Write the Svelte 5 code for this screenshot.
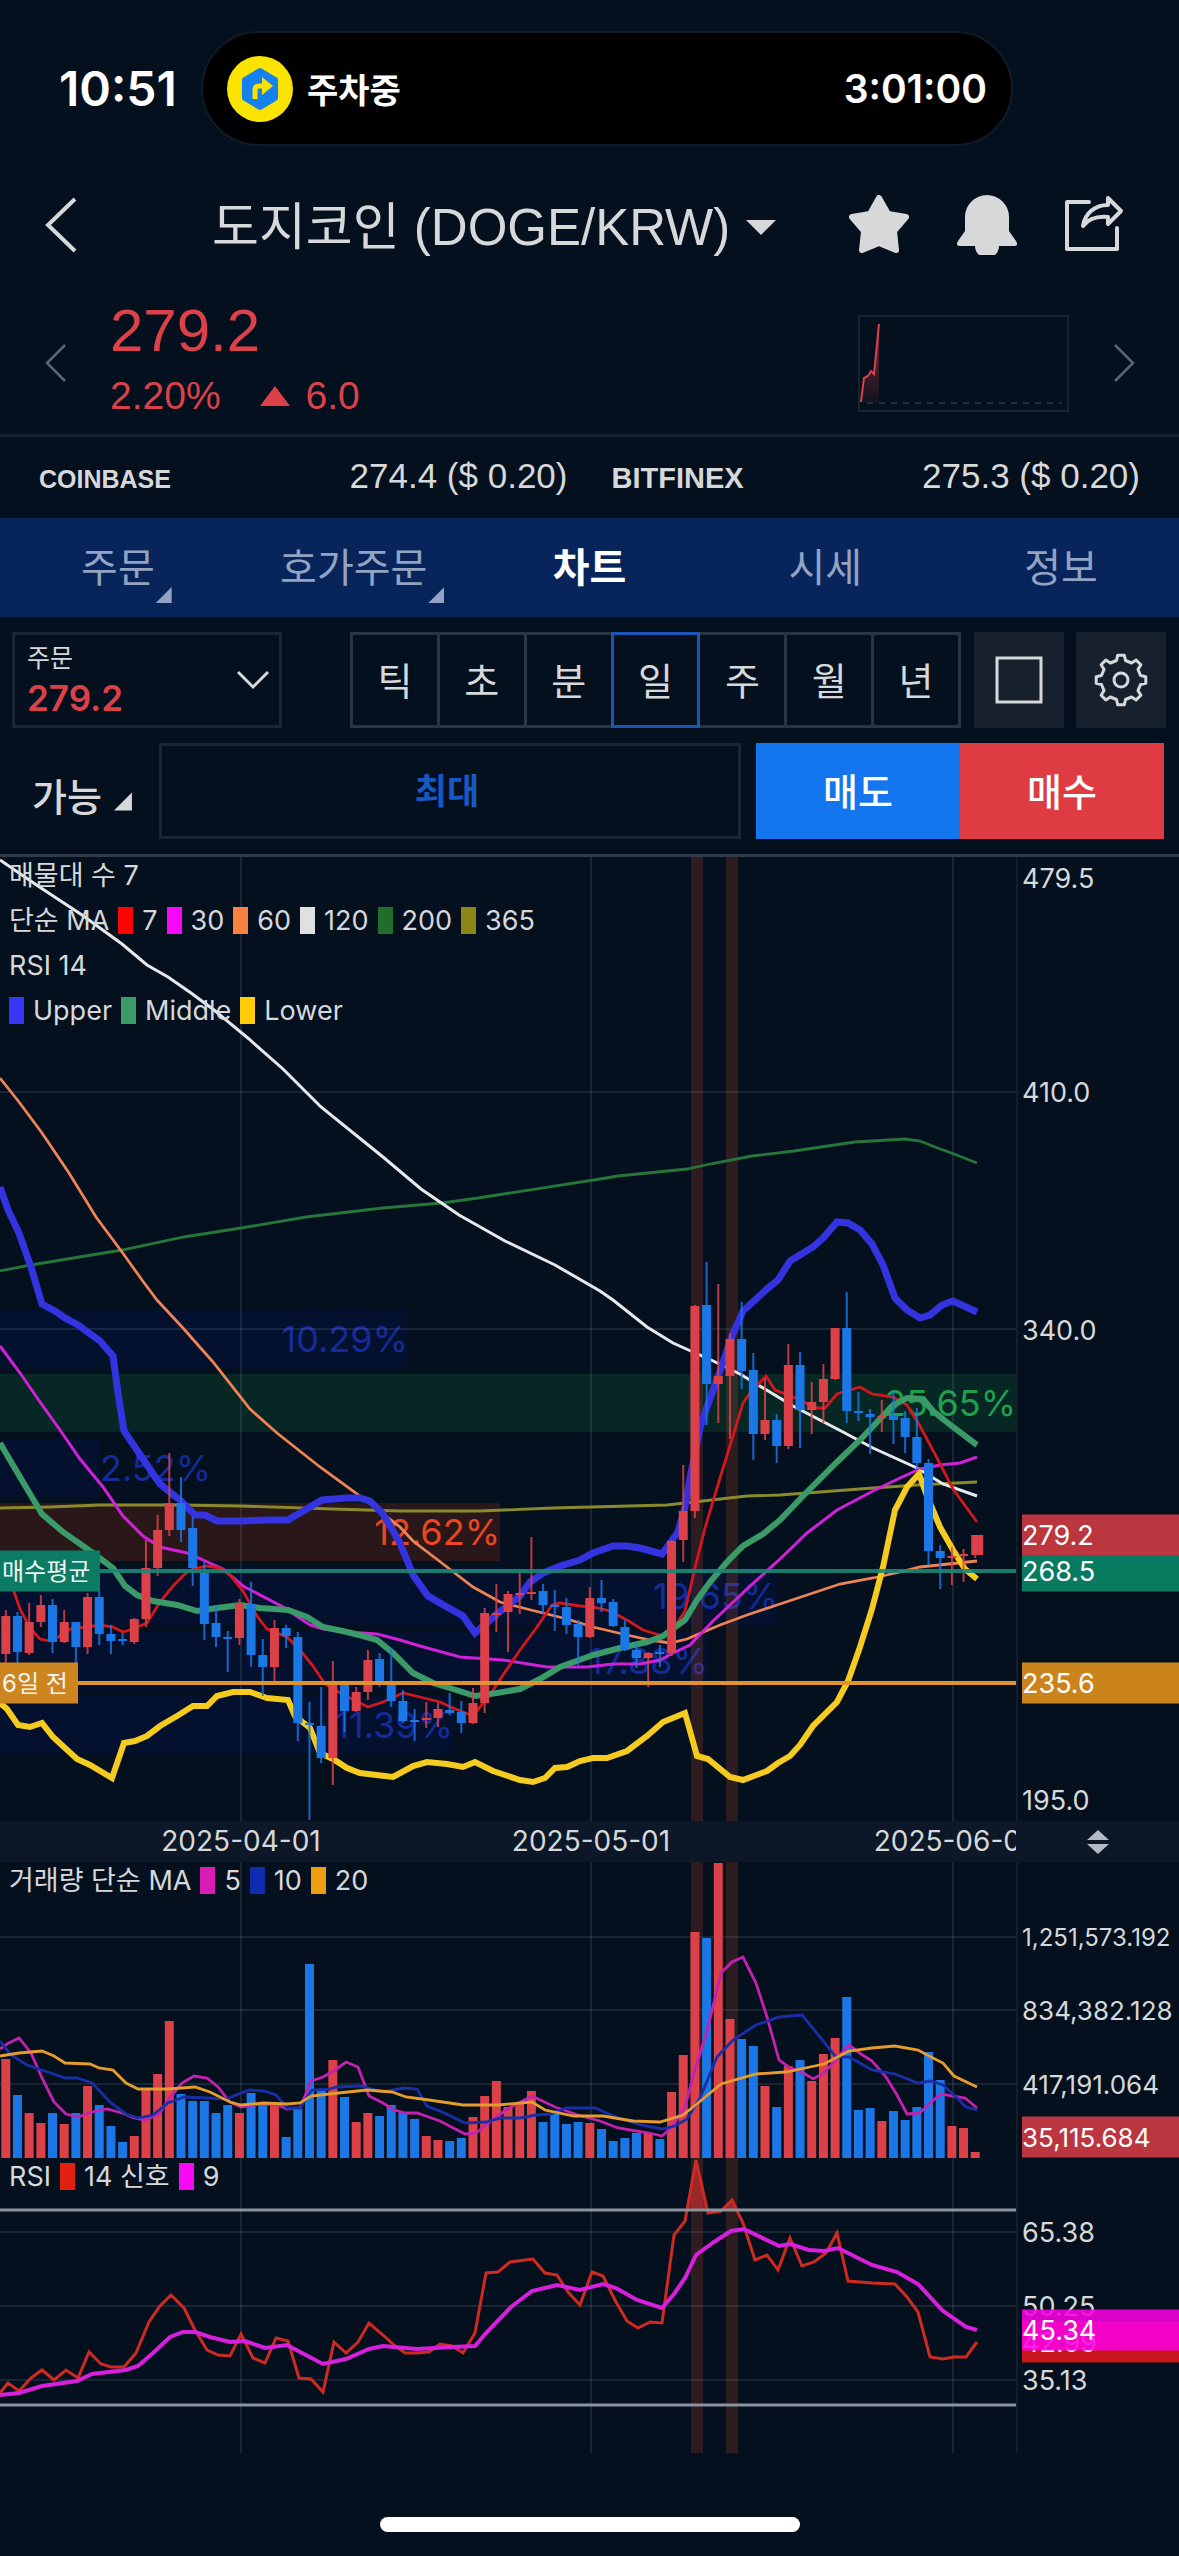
<script lang="ts">
	const UP = '#dc414a';
	const DOWN = '#1b76e6';

	const PLOT_W = 1016;
	const PRICE_H = 964;
	const VOLUME_H = 296;
	const RSI_H = 295;

	const tabs = [
		{ label: '주문', fold: true },
		{ label: '호가주문', fold: true },
		{ label: '차트', active: true },
		{ label: '시세' },
		{ label: '정보' },
	];
	const periods = ['틱', '초', '분', '일', '주', '월', '년'];
	let period = $state('일');

	const exchanges = [
		{ name: 'COINBASE', size: 'small', price: '274.4 ($ 0.20)' },
		{ name: 'BITFINEX', size: 'large', price: '275.3 ($ 0.20)' },
	];

	// high, body top, body bottom, low (plot px), up?, volume height
	const candles = [
		[753, 759, 797, 811, 1, 99], [755, 759, 795, 806, 0, 63], [746, 765, 796, 798, 1, 45],
		[738, 748, 765, 770, 1, 35], [742, 748, 785, 796, 0, 45], [753, 765, 785, 786, 1, 34],
		[765, 765, 790, 807, 0, 45], [736, 740, 790, 797, 1, 72], [734, 740, 777, 788, 0, 53],
		[768, 777, 784, 797, 0, 32], [776, 782, 784, 788, 0, 16], [761, 762, 785, 787, 1, 22],
		[683, 711, 762, 770, 1, 68], [658, 673, 711, 719, 1, 84], [596, 646, 673, 679, 1, 137],
		[620, 646, 673, 685, 0, 64], [660, 671, 711, 729, 0, 57], [705, 716, 767, 783, 0, 57],
		[749, 766, 780, 790, 0, 45], [774, 780, 782, 815, 0, 53], [742, 746, 781, 788, 1, 45],
		[725, 747, 798, 810, 0, 65], [782, 798, 810, 839, 0, 53], [763, 771, 810, 824, 1, 53],
		[768, 771, 779, 791, 0, 21], [775, 780, 866, 884, 0, 50], [845, 866, 868, 963, 0, 194],
		[830, 869, 901, 906, 0, 69], [804, 826, 901, 928, 1, 98], [827, 827, 854, 875, 0, 61],
		[830, 835, 854, 855, 1, 36], [793, 803, 835, 843, 1, 45], [796, 802, 826, 830, 0, 42],
		[791, 828, 844, 850, 0, 53], [833, 844, 864, 866, 0, 45], [852, 863, 865, 884, 0, 39],
		[845, 861, 863, 871, 1, 22], [846, 852, 861, 870, 1, 18], [836, 853, 856, 858, 0, 17],
		[844, 855, 866, 876, 0, 20], [831, 846, 866, 867, 1, 41], [751, 756, 846, 856, 1, 62],
		[727, 756, 758, 775, 1, 77], [734, 737, 755, 795, 1, 51], [716, 736, 738, 757, 1, 55],
		[680, 735, 737, 743, 1, 67], [727, 734, 748, 757, 0, 36], [733, 748, 750, 774, 0, 45],
		[741, 750, 768, 777, 0, 34], [763, 767, 780, 808, 0, 36], [730, 741, 780, 781, 1, 35],
		[723, 741, 746, 755, 0, 29], [742, 745, 769, 770, 0, 17], [763, 770, 793, 794, 0, 20],
		[786, 793, 801, 811, 0, 25], [795, 796, 801, 830, 1, 25], [788, 795, 797, 810, 0, 19],
		[683, 684, 796, 799, 1, 66], [608, 654, 683, 705, 1, 103], [448, 449, 654, 661, 1, 226],
		[405, 448, 527, 568, 0, 220], [427, 519, 527, 566, 1, 295], [476, 482, 519, 582, 1, 139],
		[445, 482, 514, 532, 0, 119], [496, 513, 577, 603, 0, 112], [521, 563, 577, 583, 1, 72],
		[557, 563, 589, 606, 0, 51], [487, 508, 589, 592, 1, 92], [495, 508, 553, 591, 0, 98],
		[525, 545, 553, 577, 1, 77], [507, 522, 545, 566, 1, 104], [471, 471, 522, 523, 1, 120],
		[435, 471, 554, 566, 0, 161], [535, 554, 556, 564, 0, 48], [552, 557, 560, 597, 0, 50],
		[543, 559, 561, 575, 1, 37], [535, 559, 563, 587, 0, 47], [554, 561, 580, 596, 0, 38],
		[551, 580, 606, 613, 0, 51], [602, 606, 694, 708, 0, 106], [688, 694, 701, 732, 0, 78],
		[690, 699, 701, 728, 1, 32], [692, 697, 699, 725, 1, 30], [678, 678, 698, 701, 1, 6],
	].map(([high, top, bottom, low, up, volume], i, all) => ({
		x: 5.8 + i * 11.68,
		width: i === all.length - 1 ? 12 : 9,
		high, top, bottom, low, volume,
		color: up ? UP : DOWN,
	}));

	const monthLines = [241, 591, 953];
	const overbought = [691, 726];

	const priceLines = [
		{ color: '#26763c', width: 2.8, points: '0,414 31,408 122,393 184,380 241,371 306,360 383,351 442,346 478,341 600,322 618,319 687,312 710,307 752,299 794,294 855,285 905,282 920,284 935,290 954,297 977,306' },
		{ color: '#8a8a2c', width: 2.8, points: '0,651 50,650 100,648 177,648 240,649 333,652 400,654 480,654 553,651 667,648 747,639 780,638 873,631 917,628 977,625' },
		{ color: '#e8e9ec', width: 3, points: '0,3 38,29 82,58 122,87 147,108 168,120 191,136 214,153 249,182 283,212 321,250 383,300 421,332 459,358 505,384 555,408 600,434 613,443 647,470 673,486 693,495 707,501 740,517 793,549 843,575 873,591 917,611 943,627 977,639' },
		{ color: '#ee8355', width: 2.8, points: '0,221 19,245 42,276 69,316 96,360 122,395 142,423 157,443 183,471 213,505 250,552 277,576 320,610 360,639 400,670 413,684 447,710 473,730 500,745 527,752 567,762 593,770 627,778 650,783 670,786 687,782 720,768 747,758 780,747 840,727 873,721 900,715 920,710 977,704' },
		{ color: '#d021d8', width: 3, points: '0,489 20,516 40,545 60,573 80,602 103,630 123,659 143,679 160,690 187,696 203,703 223,712 243,729 283,750 310,768 323,772 347,775 377,777 400,783 420,789 460,800 503,803 547,810 587,810 613,807 640,807 660,803 673,796 690,788 713,764 747,732 780,702 807,676 837,653 873,634 900,621 920,612 940,608 960,606 977,600' },
		{ color: '#d4171c', width: 2.8, points: '12,729 20,752 30,771 40,782 50,784 58,780 70,772 100,768 113,770 123,775 133,772 147,766 160,745 173,729 187,715 197,711 207,709 220,711 230,718 243,734 257,759 267,772 287,780 300,793 313,809 325,827 337,834 350,841 368,850 383,845 403,836 420,840 440,845 453,851 473,859 480,850 490,838 503,818 520,793 537,770 552,748 560,746 580,749 593,750 610,754 627,763 643,773 663,779 673,773 685,754 695,711 705,671 720,621 733,579 743,546 750,536 766,519 775,533 788,538 803,544 813,551 825,551 837,537 850,533 860,530 872,537 893,540 907,548 920,569 937,601 953,632 977,665' },
		{ color: '#3433e0', width: 7, points: '0,330 8,353 19,376 31,410 42,447 55,454 65,461 78,468 100,484 113,499 118,536 124,574 143,602 160,627 180,643 195,658 205,658 217,664 240,664 267,663 288,663 322,643 347,641 360,641 370,644 383,657 400,686 413,718 428,739 447,750 463,759 475,776 497,757 520,739 530,725 543,716 560,709 580,703 593,696 613,689 627,689 640,691 662,697 670,686 678,675 685,650 690,621 700,571 707,550 720,514 732,479 743,454 767,432 778,423 790,404 813,390 823,381 837,365 848,366 860,373 872,387 883,408 895,441 907,453 920,461 930,458 942,448 953,444 977,455' },
		{ color: '#3a9a68', width: 6, points: '0,586 20,620 42,657 63,675 93,696 113,711 125,729 137,738 153,744 177,748 197,754 217,751 240,748 260,751 288,753 307,760 323,770 347,775 363,779 377,783 393,796 413,816 433,826 453,832 475,839 497,836 520,832 540,822 560,810 593,798 620,791 647,785 663,779 685,763 697,743 710,725 727,705 743,689 763,677 780,663 803,639 837,605 860,583 880,562 893,548 907,541 923,542 933,554 953,570 977,588' },
		{ color: '#f6cb1f', width: 6, points: '0,846 7,852 18,868 30,870 42,866 53,880 77,902 90,908 112,921 124,886 135,884 147,879 160,869 177,859 193,849 207,849 217,839 233,835 250,835 267,841 288,843 295,859 310,871 320,896 333,902 347,911 360,916 393,920 413,909 427,905 447,907 463,910 475,905 493,914 520,923 533,925 545,921 555,911 567,910 580,904 593,901 607,901 627,894 647,879 663,865 685,856 697,899 708,902 730,920 743,923 767,914 778,906 790,899 800,888 813,869 837,845 848,824 860,790 872,752 883,710 895,653 907,630 919,617 927,639 940,670 953,693 965,712 977,722' },
	];

	const volumeLines = [
		{ color: '#c421b0', points: '0,187 7,182 19,176 31,191 42,216 54,240 66,252 78,255 92,250 107,247 122,251 134,256 145,258 159,252 168,238 182,221 194,214 207,216 218,225 230,240 241,245 253,243 276,242 287,247 300,246 311,219 323,215 335,208 346,200 358,205 369,234 383,241 394,248 406,251 417,251 440,259 465,272 476,271 486,263 499,253 509,246 532,234 555,245 578,253 600,259 618,266 649,271 662,274 672,265 685,245 695,208 708,165 721,111 732,100 743,95 756,121 767,155 779,198 790,206 802,210 813,217 824,211 849,183 861,192 872,199 886,215 897,233 907,252 920,251 930,241 941,232 965,236 977,246' },
		{ color: '#182fa8', points: '0,179 11,193 27,203 42,208 65,216 77,216 92,221 111,241 126,252 138,256 153,253 168,241 184,235 207,236 226,237 249,228 264,229 276,233 287,246 300,246 312,228 329,227 337,225 360,224 383,230 404,226 417,227 427,244 440,249 465,261 486,260 501,256 520,256 536,253 551,252 566,246 595,246 618,256 641,263 662,267 675,264 687,257 700,236 717,195 733,178 756,163 779,155 802,153 824,180 836,195 849,195 872,208 895,212 918,221 931,219 943,223 954,233 966,245 977,248' },
		{ color: '#e69c2c', points: '0,194 19,191 42,189 54,194 65,201 90,202 99,206 113,208 126,221 138,227 168,227 195,225 210,230 230,240 241,243 264,241 287,242 300,241 311,234 329,232 367,228 392,230 406,235 429,238 463,243 498,243 532,240 545,248 574,254 603,254 633,259 660,260 683,253 698,241 721,222 756,212 786,210 824,202 849,189 872,186 895,184 918,188 931,195 943,201 954,214 977,225' },
	];

	const rsiLines = [
		{ color: '#cf2a22', width: 3, points: '0,235 8,225 19,233 31,220 42,212 54,222 66,212 78,220 89,194 101,206 111,209 124,209 136,195 149,164 160,148 171,137 184,150 195,172 207,192 218,197 230,198 241,176 253,200 265,205 276,180 288,183 299,220 311,221 323,234 334,184 346,195 358,184 369,165 383,177 394,187 405,195 417,195 429,194 440,186 452,188 463,195 475,175 486,115 498,114 510,104 533,101 545,115 557,117 568,134 580,147 592,114 603,118 616,144 627,163 638,170 650,164 662,165 674,77 685,63 696,2 708,55 721,53 732,42 743,65 755,102 767,97 778,112 790,80 802,108 814,104 826,95 837,75 848,123 872,125 895,126 907,139 918,154 930,199 943,201 954,199 966,199 977,184' },
		{ color: '#d81fdc', width: 4, points: '0,237 19,235 42,228 77,223 92,216 126,212 138,208 153,195 170,179 183,174 195,174 210,179 230,184 245,183 265,190 287,187 300,194 323,206 346,201 369,191 383,188 417,191 452,189 475,188 486,175 511,149 532,133 557,127 580,132 603,126 616,130 637,142 662,150 674,136 685,120 696,97 714,84 731,73 744,71 779,88 790,86 809,92 824,93 838,90 872,107 897,114 918,126 943,153 966,169 977,172' },
	];

	const profile = [
		{ top: 453, width: 408, share: '10.29%', tone: 'blue' },
		{ top: 517, width: 1016, share: '25.65%', tone: 'green' },
		{ top: 582, width: 100, share: '2.52%', tone: 'blue' },
		{ top: 646, width: 500, share: '12.62%', tone: 'red' },
		{ top: 710, width: 778, share: '19.65%', tone: 'blue' },
		{ top: 775, width: 708, share: '17.88%', tone: 'blue' },
		{ top: 839, width: 453, share: '11.39%', tone: 'blue' },
	];

	const priceTicks = [
		{ y: 21, text: '479.5' },
		{ y: 235, text: '410.0' },
		{ y: 473, text: '340.0' },
		{ y: 943, text: '195.0' },
		{ y: 714, text: '268.5', tag: 'average' },
		{ y: 678, text: '279.2', tag: 'current' },
		{ y: 826, text: '235.6', tag: 'past' },
	];
	const volumeTicks = [
		{ y: 75, text: '1,251,573.192', size: 'long' },
		{ y: 148, text: '834,382.128', size: 'medium' },
		{ y: 222, text: '417,191.064', size: 'medium' },
		{ y: 275, text: '35,115.684', size: 'medium', tag: 'current' },
	];
	const rsiTicks = [
		{ y: 74, text: '65.38' },
		{ y: 148, text: '50.25' },
		{ y: 222, text: '35.13' },
		{ y: 184, text: '42.99', tag: 'rsi' },
		{ y: 172, text: '45.34', tag: 'signal' },
	];

	const legends = {
		ma: [
			['#fa0404', '7'], ['#f708f7', '30'], ['#fa8040', '60'],
			['#e0e0e0', '120'], ['#1f6e2c', '200'], ['#8c8614', '365'],
		],
		rsiBand: [['#3636f5', 'Upper'], ['#3a9a68', 'Middle'], ['#ffcc08', 'Lower']],
		volume: [['#d81cb4', '5'], ['#102cae', '10'], ['#ee9c10', '20']],
		rsi: [['#e2200e', '14 신호'], ['#f708f7', '9']],
	};

	const pct = (x: number) => `${(x / PLOT_W) * 100}%`;

	function gear(teeth: number, outer: number, inner: number) {
		const step = (Math.PI * 2) / teeth;
		const pts = [];
		for (let i = 0; i < teeth; i++) {
			for (const [r, a] of [[outer, -0.17], [outer, 0.17], [inner, 0.29], [inner, 0.71]]) {
				const t = (i + a) * step;
				pts.push(`${(27 + r * Math.sin(t)).toFixed(1)},${(27 - r * Math.cos(t)).toFixed(1)}`);
			}
		}
		return pts.join(' ');
	}
</script>

{#snippet swatches(items)}
	{#each items as [color, label]}
		<i class="swatch" style:background={color}></i><span>{label}</span>
	{/each}
{/snippet}

{#snippet grid(height, rows)}
	{#each monthLines as x}
		<line x1={x} x2={x} y1="0" y2={height} class="grid-line" />
	{/each}
	{#each rows as y}
		<line x1="0" x2={PLOT_W} y1={y} y2={y} class="grid-line" />
	{/each}
	{#each overbought as x}
		<rect {x} y="0" width="12" {height} fill="#c85034" fill-opacity="0.21" />
	{/each}
{/snippet}

{#snippet axis(ticks)}
	<div class="axis">
		{#each ticks as t}
			<span class="tick {t.tag ?? ''} {t.size ?? ''}" class:tag={t.tag} style:top="{t.y}px">{t.text}</span>
		{/each}
	</div>
{/snippet}

<div class="screen">
	<div class="status">
		<time class="clock">10:51</time>
		<div class="island">
			<svg width="66" height="66" viewBox="0 0 66 66">
				<circle cx="33" cy="33" r="33" fill="#fbe300" />
				<path d="M33 15 48 24V42L33 51 18 42V24Z" fill="#1580f0" stroke="#1580f0" stroke-width="6" stroke-linejoin="round" />
				<path d="M28 43V34Q28 30 32 30H36" fill="none" stroke="#fbe300" stroke-width="5" />
				<path d="M35 21 46 30 35 39Z" fill="#fbe300" />
			</svg>
			<span class="parking">주차중</span>
			<span class="timer">3:01:00</span>
		</div>
	</div>

	<header>
		<button class="back" aria-label="뒤로">
			<svg width="34" height="60" viewBox="0 0 34 60">
				<path d="M31 4 4 30 31 56" fill="none" stroke="#d6d8da" stroke-width="4" />
			</svg>
		</button>
		<button class="title">
			<span>도지코인 (DOGE/KRW)</span>
			<svg width="30" height="16" viewBox="0 0 30 16"><path d="M0 0H30L15 15Z" fill="#d6d8da" /></svg>
		</button>
		<div class="actions">
			<button aria-label="관심">
				<svg width="60" height="60" viewBox="0 0 60 60">
					<path d="M30 3 39 19 57 22 45 36 47 55 30 48 13 55 15 36 3 22 21 19Z" fill="#d6d8da" stroke="#d6d8da" stroke-width="6" stroke-linejoin="round" />
				</svg>
			</button>
			<button aria-label="알림">
				<svg width="60" height="60" viewBox="0 0 60 60">
					<path d="M8 22A22 22 0 0 1 52 22V36L59 46Q62 51 57 51H42A12 12 0 0 1 18 51H3Q-2 51 1 46L8 36Z" fill="#d6d8da" />
				</svg>
			</button>
			<button aria-label="공유">
				<svg width="60" height="60" viewBox="0 0 60 60" fill="none" stroke="#d6d8da" stroke-linecap="round" stroke-linejoin="round">
					<path d="M24 7H2V54H52V33" stroke-width="4" />
					<path d="M43 3 56 16 43 29V22C32 21 24 23 18 31 20 18 30 10 43 10Z" stroke-width="4" />
				</svg>
			</button>
		</div>
	</header>

	<section class="quote">
		<button class="side" aria-label="이전">
			<svg width="22" height="40" viewBox="0 0 22 40"><path d="M20 2 2 20 20 38" fill="none" stroke="#5d6570" stroke-width="2.5" /></svg>
		</button>
		<div class="figures">
			<div class="price">279.2</div>
			<div class="change">
				<span>2.20%</span>
				<svg width="30" height="20" viewBox="0 0 30 20"><path d="M15 0 30 20H0Z" fill={UP} /></svg>
				<span>6.0</span>
			</div>
		</div>
		<svg class="spark" width="211" height="97" viewBox="0 0 211 97">
			<defs>
				<linearGradient id="spark-fill" x1="0" y1="0" x2="0" y2="1">
					<stop offset="0" stop-color={UP} stop-opacity="0.6" />
					<stop offset="1" stop-color={UP} stop-opacity="0.05" />
				</linearGradient>
			</defs>
			<rect x="1" y="1" width="209" height="95" fill="none" stroke="#1a2430" stroke-width="2" />
			<line x1="9" x2="204" y1="88" y2="88" stroke="#242d3a" stroke-width="2" stroke-dasharray="6 6" />
			<path d="M3 87 6 63 10 61 13 56 16 59 21 9V88H3Z" fill="url(#spark-fill)" />
			<path d="M3 87 6 63 10 61 13 56 16 59 21 9" fill="none" stroke={UP} stroke-width="2" />
		</svg>
		<button class="side" aria-label="다음">
			<svg width="22" height="40" viewBox="0 0 22 40"><path d="M2 2 20 20 2 38" fill="none" stroke="#5d6570" stroke-width="2.5" /></svg>
		</button>
	</section>

	<section class="exchanges">
		{#each exchanges as ex}
			<div class="exchange">
				<b class={ex.size}>{ex.name}</b>
				<span>{ex.price}</span>
			</div>
		{/each}
	</section>

	<nav>
		{#each tabs as tab}
			<button class="tab" class:active={tab.active}>
				<span class="tab-label">{tab.label}{#if tab.fold}<i class="fold"></i>{/if}</span>
			</button>
		{/each}
	</nav>

	<section class="toolbar">
		<button class="order">
			<span class="order-text">
				<span class="order-label">주문</span>
				<span class="order-price">279.2</span>
			</span>
			<svg width="32" height="20" viewBox="0 0 32 20"><path d="M1 2 16 17 31 2" fill="none" stroke="#d6d8da" stroke-width="3" /></svg>
		</button>
		<div class="periods">
			{#each periods as p}
				<button class="period" class:selected={period === p} onclick={() => (period = p)}>{p}</button>
			{/each}
		</div>
		<button class="tool" aria-label="전체 화면">
			<svg width="48" height="48" viewBox="0 0 48 48"><rect x="2" y="2" width="44" height="44" fill="none" stroke="#d6d8da" stroke-width="3" /></svg>
		</button>
		<button class="tool" aria-label="설정">
			<svg width="54" height="54" viewBox="0 0 54 54" fill="none" stroke="#d6d8da" stroke-width="3" stroke-linejoin="round">
				<polygon points={gear(8, 25, 20)} />
				<circle cx="27" cy="27" r="7" />
			</svg>
		</button>
	</section>

	<section class="trade">
		<button class="available">가능<i class="fold"></i></button>
		<input type="text" placeholder="최대" aria-label="주문 수량" />
		<div class="sides">
			<button class="sell">매도</button>
			<button class="buy">매수</button>
		</div>
	</section>

	<section class="pane main">
		<div class="plot">
			{#each profile as band}
				<div class="band {band.tone}" style:top="{band.top}px" style:width={pct(band.width)}>
					<span class:outside={band.width < 130}>{band.share}</span>
				</div>
			{/each}
			<svg class="chart" viewBox="0 0 {PLOT_W} {PRICE_H}" preserveAspectRatio="none">
				{@render grid(PRICE_H, [235, 472])}
				{#each priceLines as l}
					<polyline points={l.points} fill="none" stroke={l.color} stroke-width={l.width} />
				{/each}
				{#each candles as c}
					<line x1={c.x} x2={c.x} y1={c.high} y2={c.low} stroke={c.color} stroke-width="2" stroke-opacity="0.85" />
					<rect x={c.x - c.width / 2 + (c.width > 9 ? 2 : 0)} y={c.top} width={c.width} height={c.bottom - c.top} fill={c.color} />
				{/each}
				<line x1="0" x2={PLOT_W} y1="714" y2="714" stroke="#1c8873" stroke-width="4" stroke-opacity="0.9" />
				<line x1="0" x2={PLOT_W} y1="826" y2="826" stroke="#dd9330" stroke-width="4" />
			</svg>
			<span class="marker average" style:top="714px">매수평균</span>
			<span class="marker past" style:top="826px">6일 전</span>
			<div class="legend">
				<p><span>매물대 수 7</span></p>
				<p><span>단순 MA</span>{@render swatches(legends.ma)}</p>
				<p><span>RSI 14</span></p>
				<p>{@render swatches(legends.rsiBand)}</p>
			</div>
		</div>
		{@render axis(priceTicks)}
	</section>

	<section class="dates">
		<div class="date-track">
			<time style:left={pct(241)}>2025-04-01</time>
			<time style:left={pct(591)}>2025-05-01</time>
			<time style:left={pct(953)}>2025-06-01</time>
		</div>
		<button class="resize" aria-label="차트 크기 조절">
			<svg width="22" height="24" viewBox="0 0 22 24"><path d="M11 0 22 10H0ZM11 24 0 14H22Z" fill="#b4bac4" /></svg>
		</button>
	</section>

	<section class="pane volume">
		<div class="plot">
			<svg class="chart" viewBox="0 0 {PLOT_W} {VOLUME_H}" preserveAspectRatio="none">
				{@render grid(VOLUME_H, [75, 148, 222])}
				{#each candles as c}
					<rect x={c.x - 4.5} y={VOLUME_H - c.volume} width="9" height={c.volume} fill={c.color} />
				{/each}
				{#each volumeLines as l}
					<polyline points={l.points} fill="none" stroke={l.color} stroke-width="2.8" />
				{/each}
			</svg>
			<div class="legend">
				<p><span>거래량 단순 MA</span>{@render swatches(legends.volume)}</p>
			</div>
		</div>
		{@render axis(volumeTicks)}
	</section>

	<section class="pane rsi-pane">
		<div class="plot">
			<svg class="chart" viewBox="0 0 {PLOT_W} {RSI_H}" preserveAspectRatio="none">
				{@render grid(RSI_H, [74, 148, 222])}
				<path d="M687 51 696 2 707 51ZM725 51 732 42 738 51Z" fill="#e03030" fill-opacity="0.6" />
				{#each rsiLines as l}
					<polyline points={l.points} fill="none" stroke={l.color} stroke-width={l.width} />
				{/each}
				<line x1="0" x2={PLOT_W} y1="52" y2="52" stroke="#8c939e" stroke-width="3" />
				<line x1="0" x2={PLOT_W} y1="247" y2="247" stroke="#8c939e" stroke-width="3" />
			</svg>
			<div class="legend">
				<p><span>RSI</span>{@render swatches(legends.rsi)}</p>
			</div>
		</div>
		{@render axis(rsiTicks)}
	</section>

	<div class="home"></div>
</div>

<style>
	:global(body) {
		margin: 0;
		background: #04101d;
	}

	.screen {
		background: #04101d;
		color: #d6d8da;
		font-family: Inter, 'Noto Sans CJK KR', sans-serif;
		overflow: hidden;
	}

	button {
		background: none;
		border: none;
		padding: 0;
		margin: 0;
		color: inherit;
		font: inherit;
		cursor: pointer;
	}

	svg {
		display: block;
		flex-shrink: 0;
	}

	.status {
		display: flex;
		align-items: center;
		padding: 31px 166px 0 59px;
		color: #fff;
		font-weight: 600;
	}

	.clock {
		width: 142px;
		font-size: 48px;
	}

	.island {
		flex: 1;
		display: flex;
		align-items: center;
		height: 111px;
		padding: 0 24px;
		border: 2px solid #101b28;
		border-radius: 58px;
		background: #000;
	}

	.parking {
		margin-left: 14px;
		font-size: 34px;
	}

	.timer {
		margin-left: auto;
		font-size: 39px;
	}

	header {
		display: flex;
		align-items: center;
		height: 114px;
		padding: 22px 54px 0 44px;
	}

	.title {
		display: flex;
		align-items: center;
		gap: 16px;
		margin-left: 134px;
		padding-top: 5px;
		font-family: 'Liberation Sans', 'Noto Sans CJK KR', sans-serif;
		font-size: 51px;
		line-height: 72px;
		white-space: nowrap;
	}

	.actions {
		display: flex;
		gap: 48px;
		margin-left: auto;
	}

	.quote {
		display: flex;
		align-items: center;
		height: 142px;
		padding: 10px 44px 0 45px;
		border-bottom: 3px solid #18222e;
		font-family: 'Liberation Sans', sans-serif;
		color: #dc414a;
	}

	.figures {
		flex: 1;
		margin-left: 43px;
	}

	.price {
		font-size: 60px;
		line-height: 66px;
	}

	.change {
		display: flex;
		align-items: center;
		font-size: 39px;
		line-height: 64px;
	}

	.change svg {
		margin: 0 16px 0 39px;
	}

	.spark {
		margin-right: 44px;
	}

	.exchanges {
		display: grid;
		grid-template-columns: 1fr 1fr;
		height: 81px;
		padding: 0 39px;
		column-gap: 44px;
		font-family: 'Liberation Sans', sans-serif;
	}

	.exchange {
		display: flex;
		align-items: baseline;
		justify-content: space-between;
		font-size: 35px;
		line-height: 77px;
	}

	.exchange b.small { font-size: 25px; }
	.exchange b.large { font-size: 29px; }

	nav {
		display: grid;
		grid-template-columns: repeat(5, 1fr);
		height: 99px;
		background: #07255a;
		color: #92a3c4;
		font-size: 40px;
	}

	.tab {
		padding-bottom: 5px;
	}

	.tab-label {
		position: relative;
	}

	.tab.active {
		color: #fff;
		font-weight: 700;
	}

	.fold {
		display: inline-block;
		width: 16px;
		height: 16px;
		background: currentColor;
		clip-path: polygon(100% 0, 100% 100%, 0 100%);
	}

	.tab .fold {
		position: absolute;
		right: -17px;
		bottom: -11px;
	}

	.toolbar {
		display: flex;
		height: 96px;
		padding: 15px 13px 0 12px;
	}

	.order {
		display: flex;
		align-items: center;
		justify-content: space-between;
		flex: 0 1 270px;
		box-sizing: border-box;
		border: 3px solid #1c2632;
		padding: 0 10px 0 12px;
		text-align: left;
	}

	.order-text {
		display: flex;
		flex-direction: column;
	}

	.order-label {
		font-size: 25px;
		line-height: 36px;
	}

	.order-price {
		color: #dc414a;
		font-size: 35px;
		font-weight: 600;
		line-height: 44px;
	}

	.periods {
		display: flex;
		flex: 1;
		margin: 0 13px 0 68px;
	}

	.period {
		flex: 1;
		border: 3px solid #2b3542;
		padding-bottom: 3px;
		font-size: 38px;
	}

	.period + .period {
		margin-left: -3px;
	}

	.period.selected {
		position: relative;
		border-color: #1c56b4;
	}

	.tool {
		display: grid;
		place-items: center;
		width: 90px;
		background: #17202d;
	}

	.tool + .tool {
		margin-left: 12px;
	}

	.trade {
		display: flex;
		height: 96px;
		padding: 15px 15px;
		border-bottom: 3px solid #303a49;
	}

	.available {
		width: 144px;
		padding: 6px 0 0 17px;
		font-size: 38px;
		font-weight: 500;
		text-align: left;
		white-space: nowrap;
	}

	.available .fold {
		width: 18px;
		height: 18px;
		margin-left: 12px;
	}

	.trade input {
		flex: 1;
		min-width: 0;
		box-sizing: border-box;
		border: 3px solid #1c2632;
		padding: 0 6px 0 0;
		background: none;
		color: #1858c4;
		font: inherit;
		font-size: 35px;
		font-weight: 700;
		text-align: center;
	}

	.trade input::placeholder {
		color: #1858c4;
		opacity: 1;
	}

	.sides {
		display: flex;
		width: 408px;
		margin-left: 15px;
		color: #fff;
		font-size: 38px;
		font-weight: 500;
	}

	.sides button {
		flex: 1;
		padding-bottom: 3px;
	}

	.sell { background: #1476ee; }
	.buy { background: #de3b43; }

	.pane {
		display: grid;
		grid-template-columns: 1fr 163px;
	}

	.main { height: 964px; }
	.volume { height: 296px; }
	.rsi-pane { height: 295px; }

	.plot {
		position: relative;
		min-width: 0;
	}

	.chart {
		position: relative;
		width: 100%;
		height: 100%;
	}

	.grid-line {
		stroke: #8296b4;
		stroke-opacity: 0.17;
		stroke-width: 2;
	}

	.axis {
		position: relative;
		box-sizing: border-box;
		border-left: 2px solid #131e2a;
		font-size: 27px;
	}

	.tick {
		position: absolute;
		left: 4px;
		right: 0;
		line-height: 41px;
		transform: translateY(-50%);
	}

	.tick.medium { font-size: 26px; }
	.tick.long { font-size: 24px; }
	.tick.tag { color: #fff; }
	.tick.current { background: #bb363e; }
	.tick.average { background: #087a60; }
	.tick.past { background: #cb841c; }
	.tick.rsi { background: #c8161a; }
	.tick.signal { background: rgba(248, 0, 224, 0.88); }

	.band {
		position: absolute;
		left: 0;
		height: 58px;
		font-size: 36px;
		line-height: 58px;
		text-align: right;
	}

	.band .outside {
		position: absolute;
		left: 100%;
	}

	.band.blue {
		background: #03112e;
		color: #152b9c;
	}

	.band.green {
		background: #062724;
		color: #1fa04c;
	}

	.band.red {
		background: #2a1719;
		color: #ee4520;
	}

	.marker {
		position: absolute;
		left: 0;
		padding: 0 10px 0 2px;
		font-size: 24px;
		line-height: 41px;
		color: #f0f4f4;
		transform: translateY(-50%);
	}

	.marker.average { background: #0b7c63; }
	.marker.past { background: #cc851f; }

	.legend {
		position: absolute;
		top: -4px;
		left: 9px;
		font-size: 27px;
	}

	.legend p {
		display: flex;
		align-items: center;
		gap: 9px;
		margin: 0;
		line-height: 45px;
		white-space: nowrap;
	}

	.swatch {
		width: 15px;
		height: 27px;
	}

	.dates {
		display: grid;
		grid-template-columns: 1fr 163px;
		height: 41px;
		background: #0c1728;
		font-size: 28px;
		line-height: 41px;
	}

	.date-track {
		position: relative;
		overflow: hidden;
	}

	.date-track time {
		position: absolute;
		transform: translateX(-50%);
		white-space: nowrap;
	}

	.resize {
		display: grid;
		place-items: center;
	}

	.home {
		width: 420px;
		height: 15px;
		margin: 64px auto 25px;
		border-radius: 8px;
		background: #fff;
	}
</style>
